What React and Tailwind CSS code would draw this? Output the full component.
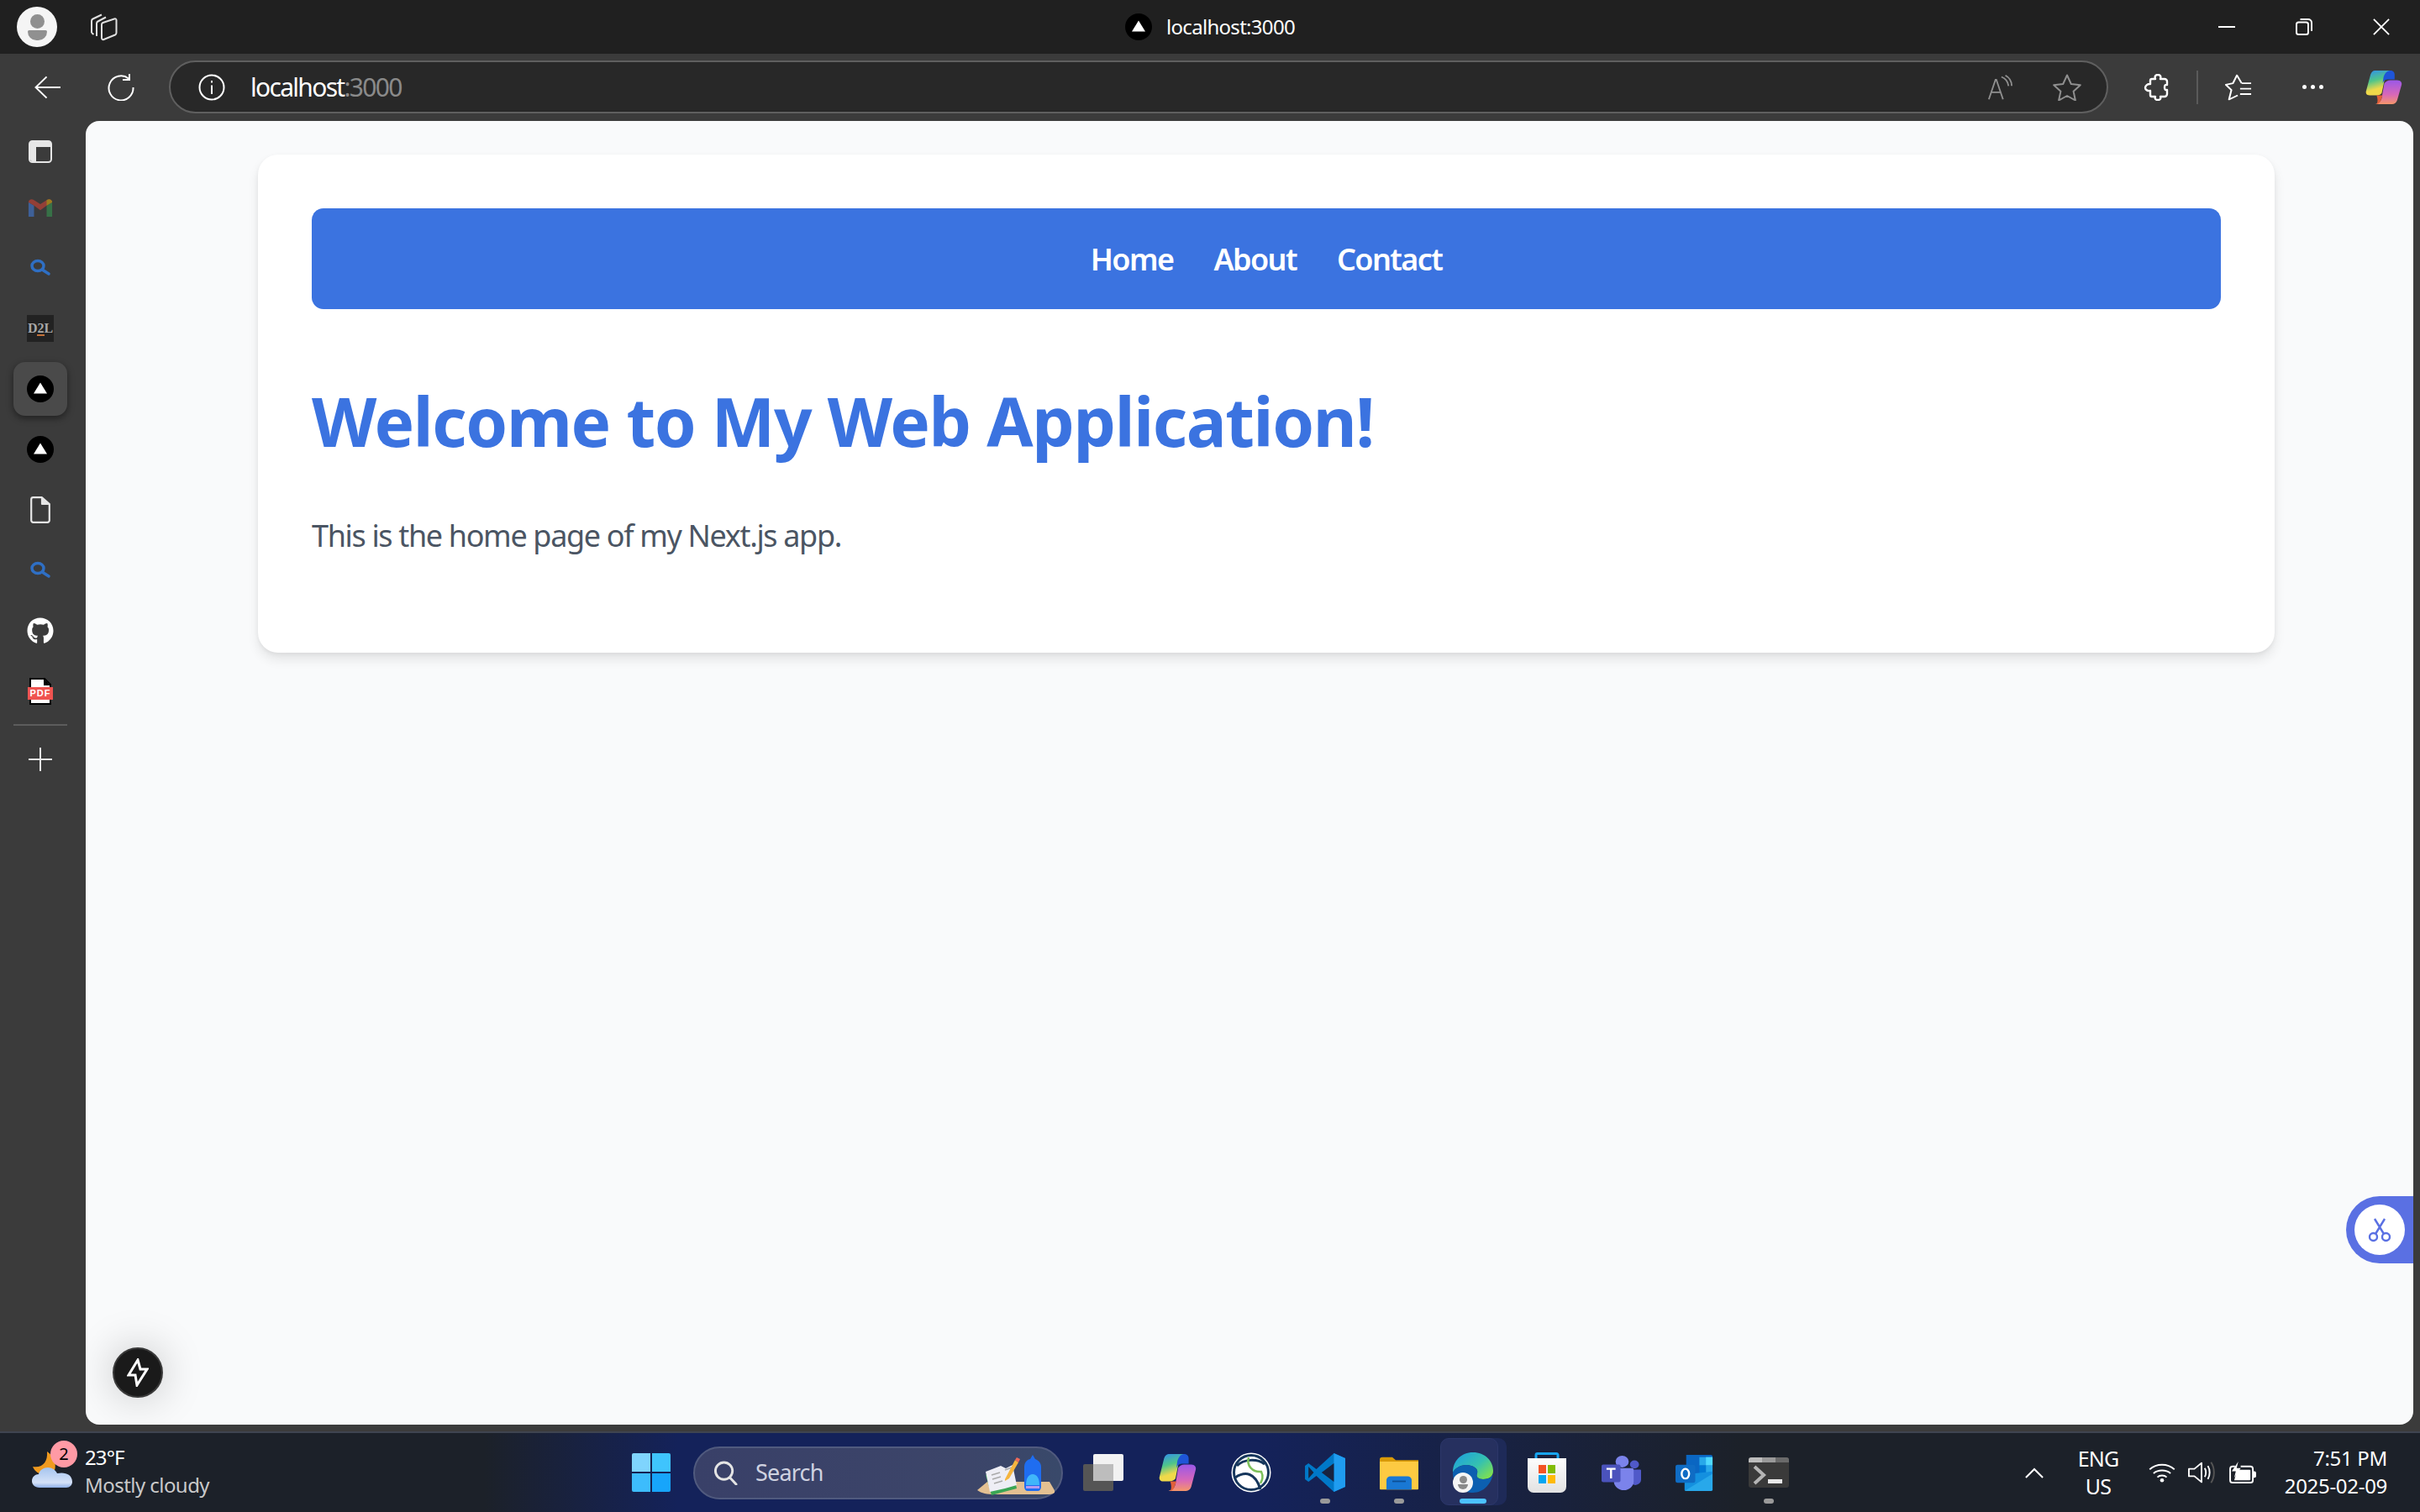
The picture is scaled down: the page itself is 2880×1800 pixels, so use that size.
import { FaGithub } from "react-icons/fa";

const font = { fontFamily: '"Noto Sans", "Open Sans", sans-serif' };

function NextLogo() {
  return (
    <svg width="32" height="32" viewBox="0 0 32 32">
      <circle cx="16" cy="16" r="16" fill="#000" />
      <path d="M16 8.5 24 21.5H8Z" fill="#fff" />
    </svg>
  );
}

function Lens() {
  return (
    <svg width="32" height="32" viewBox="0 0 32 32" fill="none" stroke="#2f6fc4" strokeWidth="3.5">
      <ellipse cx="13" cy="13.5" rx="7" ry="6" />
      <path d="M19 18.5 26 23" strokeLinecap="round" />
    </svg>
  );
}

function Gmail() {
  return (
    <svg width="30" height="22" viewBox="0 0 32 28" preserveAspectRatio="none" opacity="0.5">
      <path d="M1 6v22h7V11Z" fill="#4285f4" />
      <path d="M24 11v17h7V6Z" fill="#34a853" />
      <path d="M1 6c0-4 4-6 7-3l8 6 8-6c3-3 7-1 7 3l-7 5-8 7-8-7Z" fill="#ea4335" />
      <path d="M24 3c3-3 7-1 7 3l-7 5Z" fill="#fbbc04" />
    </svg>
  );
}

function Doc() {
  return (
    <svg width="24" height="32" viewBox="0 0 24 32" fill="none" stroke="#e6e6e6" strokeWidth="2.2" strokeLinejoin="round">
      <path d="M3.500 1.200H14L22.800 9v19.500a2.300 2.300 0 0 1-2.300 2.300H3.500a2.300 2.300 0 0 1-2.300-2.300V3.500a2.300 2.300 0 0 1 2.300-2.300Z" />
      <path d="M14 1.200V9h8.800" fill="#e6e6e6" />
    </svg>
  );
}

function Pdf() {
  return (
    <div className="relative w-[30px] h-[32px]">
      <svg width="30" height="32" viewBox="0 0 30 32">
        <path d="M3 1h17l7 7v23H3Z" fill="#fff" stroke="#000" strokeWidth="2" />
        <path d="M19 1v8h8" fill="#000" />
      </svg>
      <div className="absolute left-0 top-[11px] w-[30px] h-[15px] bg-[#ef5350] flex items-center justify-center text-[11px] leading-none font-bold text-white tracking-[1px]" style={{ fontFamily: '"Liberation Sans", sans-serif' }}>
        PDF
      </div>
    </div>
  );
}

function Slot({ active, children, className = "h-[72px]" }) {
  return (
    <div className={`${className} w-full flex items-center justify-center`}>
      {active ? (
        <div className="w-[64px] h-[64px] rounded-[14px] bg-[#4a4a4a] shadow-[0_3px_8px_rgba(0,0,0,0.45)] flex items-center justify-center">{children}</div>
      ) : (
        children
      )}
    </div>
  );
}

function Sidebar() {
  return (
    <div className="w-[102px] shrink-0 pr-[6px] flex flex-col items-center bg-[#3b3b3b]">
      <div className="h-[72px] -mb-[5px] w-full flex items-center justify-center">
        <svg width="28" height="27" viewBox="0 0 28 27" fill="none">
          <rect x="1" y="1" width="26" height="25" rx="3.5" stroke="#e6e6e6" strokeWidth="2" />
          <path d="M2 8h24V2H2ZM2 8h7v17H4a2 2 0 0 1-2-2Z" fill="#e6e6e6" />
        </svg>
      </div>
      <Slot><Gmail /></Slot>
      <Slot><Lens /></Slot>
      <Slot>
        <div className="relative w-[32px] h-[32px] bg-[#222222] flex items-center justify-center text-[16px] font-bold text-[#a8a8a8]" style={{ fontFamily: '"Liberation Serif", serif' }}>
          D2L
          <div className="absolute left-[12px] top-[23px] w-[9px] h-[2px] bg-[#c2713a]" />
        </div>
      </Slot>
      <Slot active><NextLogo /></Slot>
      <Slot><NextLogo /></Slot>
      <Slot><Doc /></Slot>
      <Slot><Lens /></Slot>
      <Slot><FaGithub className="text-white" size={32} /></Slot>
      <Slot><Pdf /></Slot>
      <div className="w-[64px] h-[2px] bg-[#5c5c5c] my-[3px]" />
      <Slot className="h-[74px]">
        <svg width="28" height="28" viewBox="0 0 28 28" stroke="#e6e6e6" strokeWidth="2">
          <path d="M14 0v28M0 14h28" />
        </svg>
      </Slot>
    </div>
  );
}

function TitleBar() {
  return (
    <div className="h-[64px] bg-[#202020] flex items-center text-white shrink-0">
      <div className="w-[1339px] flex items-center pl-[20px]">
        <div className="w-[48px] h-[48px] rounded-full bg-[#f5f5f5] flex flex-col items-center justify-center gap-[2px]">
          <div className="w-[17px] h-[17px] rounded-full bg-[#909090]" />
          <div className="w-[23px] h-[12px] rounded-b-[12px] rounded-t-[2px] bg-[#909090]" />
        </div>
        <div className="ml-[39px]">
          <svg width="34" height="34" viewBox="0 0 34 34" fill="none" stroke="#e0e0e0" strokeWidth="2" strokeLinejoin="round">
            <path d="M2 24V10c0-1 .5-2 1.500-2.500L14 2.500M2 24l2.500 2" />
            <path d="M8 28V13c0-1 .5-2 1.500-2.500L19 5.500" />
            <path d="M14 14c0-1 .5-1.500 1.500-2L29 7.500c1.500-.5 2.500 0 2.500 1.500v15c0 1-.5 2-1.500 2.500L16.500 32c-1.500.5-2.500-.5-2.500-2Z" />
          </svg>
        </div>
      </div>
      <NextLogo />
      <span className="ml-[17px] text-[24px] tracking-[-0.7px]" style={font}>localhost:3000</span>
      <div className="ml-auto flex">
        <div className="w-[92px] h-[64px] flex items-center justify-center">
          <div className="w-[20px] h-[2px] bg-white" />
        </div>
        <div className="w-[92px] h-[64px] flex items-center justify-center">
          <svg width="20" height="20" viewBox="0 0 20 20" fill="none" stroke="#fff" strokeWidth="2">
            <rect x="1" y="4.500" width="14" height="14.500" rx="2.500" />
            <path d="M5.500 1H15a4 4 0 0 1 4 4v10" />
          </svg>
        </div>
        <div className="w-[92px] h-[64px] flex items-center justify-center">
          <svg width="20" height="20" viewBox="0 0 22 22" stroke="#fff" strokeWidth="2">
            <path d="M1 1l20 20M21 1 1 21" />
          </svg>
        </div>
      </div>
    </div>
  );
}

function Copilot({ w = 45, h = 42, id = "a" }) {
  return (
    <svg width={w} height={h} viewBox="0 0 44 44" preserveAspectRatio="none">
      <defs>
        <linearGradient id={`cpA${id}`} x1="0" y1="0" x2="0.3" y2="1">
          <stop offset="0" stopColor="#2f8cf2" />
          <stop offset="0.45" stopColor="#4fc58a" />
          <stop offset="0.8" stopColor="#f0d94a" />
        </linearGradient>
        <linearGradient id={`cpB${id}`} x1="0.5" y1="0" x2="0.5" y2="1">
          <stop offset="0" stopColor="#9a58e8" />
          <stop offset="0.6" stopColor="#d868b8" />
          <stop offset="1" stopColor="#f5966a" />
        </linearGradient>
      </defs>
      <path d="M12 1h20c-5 1-7 4-8 8l-4 20c-1 2-4 3-7 3H6c-4 0-5-3-4-6L7 6c1-3 3-5 5-5Z" fill={`url(#cpA${id})`} />
      <path d="M30 1c3 0 5 2 5 5v6h-8c-3 0-5 2-6 5l1-7c1-5 4-9 8-9Z" fill="#1e55d8" />
      <path d="M32 43H12c5-1 7-4 8-8l3-18c1-2 4-4 7-4h8c4 0 6 3 5 6l-5 19c-1 3-3 5-6 5Z" fill={`url(#cpB${id})`} />
      <path d="M14 32h7l-2 6c-1 3-3 5-5 5 2-3 1-8 0-11Z" fill="#e2603a" />
    </svg>
  );
}

function ToolBox({ w, children }) {
  return <div className={`${w} h-[64px] flex items-center justify-center shrink-0`}>{children}</div>;
}

function Toolbar() {
  return (
    <div className="h-[80px] bg-[#3b3b3b] flex items-center shrink-0 pb-[1px]">
      <div className="w-[12px]" />
      <ToolBox w="w-[88px]">
        <svg width="31" height="28" viewBox="0 0 32 30" preserveAspectRatio="none" fill="none" stroke="#fff" strokeWidth="2">
          <path d="M32 15H2M15 1.500 1.500 15 15 28.500" />
        </svg>
      </ToolBox>
      <ToolBox w="w-[88px]">
        <svg width="32" height="32" viewBox="0 0 32 32" fill="none" stroke="#fff" strokeWidth="2">
          <path d="M25 5.500A14.500 14.500 0 1 0 30.500 16" />
          <path d="M26 0v7h-8" />
        </svg>
      </ToolBox>
      <div className="ml-[13px] w-[2308px] h-[63px] rounded-full border-2 border-[#5f5f5f] bg-[#282828] flex items-center pl-[33px] pr-[7px] text-[30px]" style={font}>
        <svg width="32" height="32" viewBox="0 0 32 32" fill="none" stroke="#fff" strokeWidth="2">
          <circle cx="16" cy="16" r="14.500" />
          <path d="M16 13.500V24M16 8v2.500" />
        </svg>
        <span className="ml-[30px] tracking-[-1.7px] text-white">
          localhost<span className="text-[#8a8a8a]">:3000</span>
        </span>
        <div className="ml-auto flex items-center">
          <div className="w-[80px] flex justify-center">
            <svg width="30" height="30" viewBox="0 0 32 36" preserveAspectRatio="none" fill="none" stroke="#8f8f8f" strokeWidth="2">
              <path d="M2 35 10.500 7h1L20 35M5 25h12" />
              <path d="M18 3c5 2 8 6 9 13M23 1c5 3 8 8 8 15" />
            </svg>
          </div>
          <div className="w-[80px] flex justify-center">
            <svg width="34" height="32" viewBox="0 0 34 32" fill="none" stroke="#8f8f8f" strokeWidth="2" strokeLinejoin="round">
              <path d="M17 1.500 21.800 12l11 1.200-8.200 7.600 2.300 10.700L17 26l-9.900 5.500 2.300-10.700L1.200 13.200l11-1.200Z" />
            </svg>
          </div>
        </div>
      </div>
      <div className="w-[9px]" />
      <ToolBox w="w-[96px]">
        <svg width="30" height="32" viewBox="0 0 30 32" fill="none" stroke="#fff" strokeWidth="2.400" strokeLinejoin="round">
          <path d="M10 6h4c-1-3 0-5 3-5s4 2 3 5h5a3 3 0 0 1 3 3v4c-2-.5-3 .5-3 3s1 3.500 3 3v5a3 3 0 0 1-3 3h-5c1 2.500-.5 4-3 4s-4-1.500-3-4h-4a2 2 0 0 1-2-2v-5c-3 .5-6-1-6-3.500S5 11.500 8 12V8a2 2 0 0 1 2-2Z" />
        </svg>
      </ToolBox>
      <div className="w-[2px] h-[40px] bg-[#5a5a5a]" />
      <ToolBox w="w-[96px]">
        <svg width="32" height="32" viewBox="0 0 34 40" preserveAspectRatio="none" fill="none" stroke="#fff" strokeWidth="2.200" strokeLinejoin="round">
          <path d="M21 14 15 2 10 14 1 16l7 8-3 14 11-6" />
          <path d="M21 14h12M19 22h14M19 30h14" />
        </svg>
      </ToolBox>
      <ToolBox w="w-[80px]">
        <div className="flex gap-[5px]">
          <div className="w-[5px] h-[5px] rounded-full bg-white" />
          <div className="w-[5px] h-[5px] rounded-full bg-white" />
          <div className="w-[5px] h-[5px] rounded-full bg-white" />
        </div>
      </ToolBox>
      <ToolBox w="w-[88px]">
        <Copilot id="top" />
      </ToolBox>
    </div>
  );
}

function Page() {
  return (
    <div className="relative flex-1 rounded-[16px] bg-[#f9fafb] overflow-hidden">
      <div className="ml-[205px] mt-[40px] w-[2400px] h-[593px] p-[64px] bg-white rounded-[24px] shadow-[0_8px_14px_rgba(0,0,0,0.09),0_2px_5px_rgba(0,0,0,0.05)]" style={font}>
        <nav className="h-[120px] pt-[2px] rounded-[14px] bg-[#3b73e0] flex items-center justify-center gap-[48px] text-[36px] font-semibold text-white tracking-[-1.6px]">
          <a>Home</a>
          <a>About</a>
          <a>Contact</a>
        </nav>
        <h1 className="mt-[73px] text-[80px] leading-[120px] font-bold text-[#3b73e0] tracking-[-1.35px]">Welcome to My Web Application!</h1>
        <p className="mt-[50px] text-[36px] leading-[54px] text-[#4b5563] tracking-[-1.35px]">This is the home page of my Next.js app.</p>
      </div>

      <div className="absolute left-[32px] bottom-[32px] w-[60px] h-[60px] rounded-full bg-[#1a1a1a] border-2 border-[#3a3a3a] shadow-[0_0_50px_rgba(0,0,0,0.22)] flex items-center justify-center">
        <svg width="26" height="34" viewBox="0 0 26 34" fill="none" stroke="#fff" strokeWidth="3" strokeLinejoin="miter">
          <path d="M13 2 2 20h8l2 12 12-19h-8Z" />
        </svg>
      </div>

      <div className="absolute right-0 top-[1280px] w-[80px] h-[80px] rounded-l-full bg-[#5a70e3] flex items-center pl-[10px]">
        <div className="w-[60px] h-[60px] rounded-full bg-white flex items-center justify-center">
          <svg width="30" height="30" viewBox="0 0 30 30" fill="none" stroke="#5a70e3" strokeWidth="2.400">
            <circle cx="7.500" cy="23.500" r="4.500" />
            <circle cx="22.500" cy="23.500" r="4.500" />
            <path d="M10 20 21 2M20 20 9 2" />
          </svg>
        </div>
      </div>
    </div>
  );
}

function WeatherIcon() {
  return (
    <div className="relative w-[48px] h-[46px] mb-[8px]">
      <svg width="48" height="46" viewBox="0 0 48 46">
        <defs>
          <linearGradient id="cloud" x1="0" y1="0" x2="0" y2="1">
            <stop offset="0" stopColor="#a5c4ee" />
            <stop offset="0.75" stopColor="#d5e2f8" />
            <stop offset="1" stopColor="#8fb0e8" />
          </linearGradient>
        </defs>
        <path d="M18 2C19 14 13 22 1 20c3 8 12 12 24 8 6-8 2-20-7-26Z" fill="#f09a1f" />
        <path d="M9 45C3 45 0 41 0 37c0-5 4-8 8-8 1-5 6-8 11-8s9 3 11 7c9-2 18 1 18 10 0 4-3 7-7 7Z" fill="url(#cloud)" />
      </svg>
      <div className="absolute left-[22px] -top-[11px] w-[32px] h-[32px] rounded-full bg-[#ff9aa5] text-black text-[20px] flex items-center justify-center">2</div>
    </div>
  );
}

function Windows() {
  return (
    <div className="grid grid-cols-2 gap-[2px] w-[46px] h-[46px]">
      <div className="rounded-tl-[2px] bg-[#7fd4fd]" />
      <div className="rounded-tr-[2px] bg-[#3fc4fd]" />
      <div className="rounded-bl-[2px] bg-[#3dbcfc]" />
      <div className="rounded-br-[2px] bg-[#17a5fb]" />
    </div>
  );
}

function SearchBox() {
  return (
    <div className="ml-[6px] w-[440px] h-[63px] rounded-full border-2 border-[#505a7e] bg-[linear-gradient(90deg,#394068,#3c4569_75%,#39496a)] flex items-center pl-[22px] relative">
      <svg width="29" height="29" viewBox="0 0 30 30" fill="none" stroke="#e4e4e4" strokeWidth="3">
        <circle cx="13" cy="12.500" r="10.500" />
        <path d="M20.500 21 28 29" strokeLinecap="round" />
      </svg>
      <span className="ml-[21px] text-[27px] text-[#cfd2e0] tracking-[-0.8px]" style={font}>Search</span>
      <svg className="absolute left-[336px] top-[8px]" width="92" height="48" viewBox="0 0 92 48">
        <path d="M0 42 12 32H86l7 12c-3 3-6 3-10 3H20C12 47 5 46 0 42Z" fill="#e3c092" />
        <path d="M10 24 42 18l5 22-30 8Z" fill="#3aa655" />
        <path d="M10 20 28 13 34 16 42 12l5 24-14 4-18 4Z" fill="#eeeef5" />
        <path d="M17 24l10-3M18 29l10-3M20 34l10-3M33 18l8-3" stroke="#aaa" strokeWidth="1.500" />
        <path d="M33 29 45 6l4 3-11 19-5 3Z" fill="#f5b53f" />
        <path d="M45 6l2-3 4 2-2 4Z" fill="#ef6a5a" />
        <path d="M56 38V14c0-6 5-9 7-9l3-5 3 5c3 1 7 4 7 9v24c0 3-2 5-4 5H60c-2 0-4-2-4-5Z" fill="#1f6df0" />
        <path d="M58 36c0-8 3-13 8-13s8 5 8 13Z" fill="#40b6fa" />
        <path d="M58 37h16v3H58Z" fill="#b59af0" />
      </svg>
    </div>
  );
}

function TaskView() {
  return (
    <svg width="48" height="44" viewBox="0 0 48 44">
      <rect x="12" y="0" width="36" height="32" rx="2" fill="#f2f2f2" />
      <rect x="0" y="12" width="36" height="32" rx="2" fill="#555555" />
      <rect x="12" y="12" width="24" height="20" fill="#bdbdbd" />
    </svg>
  );
}

function Clipchamp() {
  return (
    <svg width="48" height="48" viewBox="0 0 48 48">
      <circle cx="24" cy="24" r="23.500" fill="#fff" />
      <circle cx="24" cy="24" r="20.500" fill="none" stroke="#16365c" strokeWidth="3" />
      <path d="M7 16c8-8 24-9 33-2" fill="none" stroke="#16365c" strokeWidth="3" />
      <path d="M5 30c12-8 24-6 30 14" fill="none" stroke="#16365c" strokeWidth="3" />
      <path d="M21 6c-3 10 5 18 15 17 3 6 1 10-1 14" fill="none" stroke="#7cc05a" strokeWidth="2.500" />
    </svg>
  );
}

function VSCode() {
  return (
    <svg width="50" height="48" viewBox="0 0 48 48" preserveAspectRatio="none">
      <path d="M34 1 14 20 5 13 1 16v16l4 3 9-7 20 19 13-6V7Z" fill="#0078c8" />
      <path d="M34 1 47 7v34l-13 6Z" fill="#1f9cf0" />
      <path d="M34 13 20 24l14 11Z" fill="#18233f" />
      <path d="M5 17l6 7-6 7Z" fill="#18233f" />
    </svg>
  );
}

function Folder() {
  return (
    <svg width="48" height="42" viewBox="0 0 48 48" preserveAspectRatio="none">
      <path d="M1 6c0-2 1-3 3-3h12l4 4h27v8H1Z" fill="#d99a08" />
      <path d="M1 9h46v37a1 1 0 0 1-1 1H2a1 1 0 0 1-1-1Z" fill="#fdca42" />
      <path d="M9 47V34a5 5 0 0 1 5-5h20a5 5 0 0 1 5 5v13Z" fill="#1978d4" />
      <path d="M16 36h16" stroke="#0c4f94" strokeWidth="2" />
    </svg>
  );
}

function EdgeIcon() {
  return (
    <div className="relative w-[48px] h-[48px]">
      <svg width="48" height="48" viewBox="0 0 48 48">
        <defs>
          <linearGradient id="edgeA" x1="0" y1="0" x2="1" y2="0.8">
            <stop offset="0" stopColor="#1b9de2" />
            <stop offset="0.6" stopColor="#35c1b0" />
            <stop offset="1" stopColor="#7fe04f" />
          </linearGradient>
        </defs>
        <path d="M0 24C0 10 10 0 24 0c14 0 24 10 24 22 0 6-4 10-12 10-6 0-9-3-7-7 1-4-1-7-7-9C12 13 3 18 0 24Z" fill="url(#edgeA)" />
        <path d="M0 24c3-6 12-11 22-8 6 2 8 5 7 9-2 4 1 7 7 7 8 0 12-4 12-7-2 12-11 23-24 23C10 48 0 38 0 24Z" fill="#0c5fb0" />
      </svg>
      <div className="absolute left-0 bottom-0 w-[24px] h-[24px] rounded-full bg-[#f5f5f5] flex flex-col items-center justify-center gap-[1px]">
        <div className="w-[9px] h-[9px] rounded-full bg-[#8a8a8a]" />
        <div className="w-[12px] h-[6px] rounded-b-[6px] bg-[#8a8a8a]" />
      </div>
    </div>
  );
}

function Store() {
  return (
    <div className="relative w-[46px] h-[48px]">
      <svg className="absolute left-[8px] top-0" width="30" height="14" viewBox="0 0 30 14" fill="none" stroke="#18a5f0" strokeWidth="3">
        <path d="M2 14V3a1.500 1.500 0 0 1 1.500-1.500h23A1.500 1.500 0 0 1 28 3v11" />
      </svg>
      <div className="absolute left-0 top-[7px] w-[46px] h-[41px] rounded-b-[7px] bg-[linear-gradient(180deg,#fdfdfd,#e2e2e2)] grid grid-cols-2 gap-[2px] px-[13px] pt-[8px] pb-[11px]">
        <div className="bg-[#f35325]" />
        <div className="bg-[#81bc06]" />
        <div className="bg-[#05a6f0]" />
        <div className="bg-[#ffba08]" />
      </div>
    </div>
  );
}

function Teams() {
  return (
    <svg width="47" height="42" viewBox="0 0 48 48" preserveAspectRatio="none">
      <circle cx="40" cy="13" r="5.500" fill="#5059c9" />
      <path d="M30 20h17a1 1 0 0 1 1 1v13a7 7 0 0 1-14 0Z" fill="#5059c9" />
      <circle cx="25" cy="9" r="8" fill="#7b83eb" />
      <path d="M13 18h24a2 2 0 0 1 2 2v16a12 12 0 0 1-24 0Z" fill="#7b83eb" />
      <rect x="0" y="13" width="23" height="24" rx="2" fill="#4b53bc" />
      <path d="M6 19h11M11.500 19v13" stroke="#fff" strokeWidth="2.500" />
    </svg>
  );
}

function Outlook() {
  return (
    <svg width="47" height="43" viewBox="0 0 48 48" preserveAspectRatio="none">
      <path d="M13 0h30a2 2 0 0 1 2 2v24H13Z" fill="#0a66c2" />
      <path d="M29 3h16v11H29Z" fill="#28a8ea" />
      <path d="M37 3h8v11h-8Z" fill="#50d9ff" />
      <path d="M29 14h8v11h-8Z" fill="#0078d4" />
      <path d="M37 14h8v11h-8Z" fill="#28a8ea" />
      <path d="M11 26 45 22v24a2 2 0 0 1-2 2H13a2 2 0 0 1-2-2Z" fill="#1490df" />
      <path d="M11 48 45 25v21a2 2 0 0 1-2 2Z" fill="#28a8ea" />
      <rect x="0" y="13" width="24" height="24" rx="2.500" fill="#0f6cc4" />
      <ellipse cx="12" cy="25" rx="4.500" ry="6.500" fill="none" stroke="#fff" strokeWidth="2.500" />
    </svg>
  );
}

function Terminal() {
  return (
    <div className="w-[48px] h-[36px] rounded-[3px] bg-[#3a3a3a] overflow-hidden">
      <div className="flex h-[6px]">
        <div className="flex-1 bg-[#bcbcbc]" />
        <div className="flex-1 bg-[#999999]" />
        <div className="flex-1 bg-[#6a6a6a]" />
      </div>
      <svg width="48" height="30" viewBox="0 0 48 30" fill="none">
        <path d="M7 5l11 10-11 10" stroke="#b5b5b5" strokeWidth="4" />
        <path d="M23 22.500h17" stroke="#e8e8e8" strokeWidth="5" />
      </svg>
    </div>
  );
}

function TaskItem({ dot, active, children }) {
  return (
    <div className="relative w-[88px] h-[94px] flex items-center justify-center shrink-0">
      {active && (
        <>
          <div className="absolute left-[41px] top-[6px] w-[43px] h-[80px] rounded-[10px] bg-[#1e2a58]" />
          <div className="absolute left-[5px] top-[6px] w-[69px] h-[80px] rounded-[10px] bg-[#26305f] border border-[#2c376a]" />
          <div className="absolute left-[28px] top-[78px] w-[32px] h-[6px] rounded-full bg-[#4cc2ff]" />
        </>
      )}
      <div className="relative flex">{children}</div>
      {dot && <div className="absolute left-[38px] top-[78px] w-[12px] h-[6px] rounded-full bg-[#9a9a9a]" />}
    </div>
  );
}

function Taskbar() {
  return (
    <div className="h-[96px] shrink-0 border-t-2 border-[#3f4450] flex items-center text-white bg-[linear-gradient(90deg,#1c2129_0%,#1c2129_20%,#14225a_28%,#14225a_52%,#1c2129_72%,#1c2129_100%)]" style={font}>
      <div className="w-[731px] shrink-0 flex items-center pl-[38px]">
        <WeatherIcon />
        <div className="ml-[15px] mb-[4px] text-[24px] leading-[33px]">
          <div className="tracking-[-0.9px]">23°F</div>
          <div className="text-[#c9c9c9] tracking-[-0.55px]">Mostly cloudy</div>
        </div>
      </div>
      <TaskItem><Windows /></TaskItem>
      <SearchBox />
      <div className="w-[4px]" />
      <TaskItem><TaskView /></TaskItem>
      <TaskItem><Copilot w={46} h={46} id="bar" /></TaskItem>
      <TaskItem><Clipchamp /></TaskItem>
      <TaskItem dot><VSCode /></TaskItem>
      <TaskItem dot><Folder /></TaskItem>
      <TaskItem active><EdgeIcon /></TaskItem>
      <TaskItem><Store /></TaskItem>
      <TaskItem><Teams /></TaskItem>
      <TaskItem><Outlook /></TaskItem>
      <TaskItem dot><Terminal /></TaskItem>
      <div className="ml-[240px] w-[64px] flex justify-center">
        <svg width="22" height="13" viewBox="0 0 24 14" fill="none" stroke="#fff" strokeWidth="2.200">
          <path d="M1 13 12 2l11 11" />
        </svg>
      </div>
      <div className="w-[88px] text-center text-[25px] leading-[33px] tracking-[-0.8px]">
        <div>ENG</div>
        <div>US</div>
      </div>
      <div className="ml-[8px] w-[48px] flex justify-center">
        <svg width="32" height="24" viewBox="0 0 34 26" fill="none" stroke="#fff" strokeWidth="2">
          <path d="M1 9c9-8 23-8 32 0M6 14c6-5 16-5 22 0M11 19c3-3 9-3 12 0" />
          <circle cx="17" cy="23" r="2.500" fill="#fff" stroke="none" />
        </svg>
      </div>
      <div className="w-[46px] flex justify-center">
        <svg width="32" height="28" viewBox="0 0 34 32" preserveAspectRatio="none" fill="none" stroke="#fff" strokeWidth="2">
          <path d="M1 11h7l9-8v26l-9-8H1Z" strokeLinejoin="round" />
          <path d="M21 10c2 3 2 9 0 12M25 7c3 5 3 13 0 18" />
          <path d="M29 2c5 8 5 20 0 28" stroke="#555" />
        </svg>
      </div>
      <div className="w-[52px] flex justify-center">
        <svg width="33" height="27" viewBox="0 0 34 28" fill="none">
          <path d="M7 6H4a3 3 0 0 0-3 3v14a3 3 0 0 0 3 3h22a3 3 0 0 0 3-3V9a3 3 0 0 0-3-3H14" stroke="#fff" strokeWidth="2" />
          <path d="M6 23 10 10h15a1 1 0 0 1 1 1v11a1 1 0 0 1-1 1Z" fill="#fff" />
          <path d="M29 12h2a2 2 0 0 1 2 2v4a2 2 0 0 1-2 2h-2Z" fill="#fff" />
          <path d="M11 0 3 12h5l-2 8 8-12H9Z" fill="#fff" />
        </svg>
      </div>
      <div className="ml-auto pr-[39px] mb-[2px] text-right text-[24px] leading-[33px] tracking-[-0.3px]">
        <div>7:51 PM</div>
        <div>2025-02-09</div>
      </div>
    </div>
  );
}

export default function App() {
  return (
    <div className="w-[2880px] h-[1800px] flex flex-col overflow-hidden bg-[#3b3b3b]">
      <TitleBar />
      <Toolbar />
      <div className="flex-1 min-h-0 flex pb-[8px] pr-[8px]">
        <Sidebar />
        <Page />
      </div>
      <Taskbar />
    </div>
  );
}
